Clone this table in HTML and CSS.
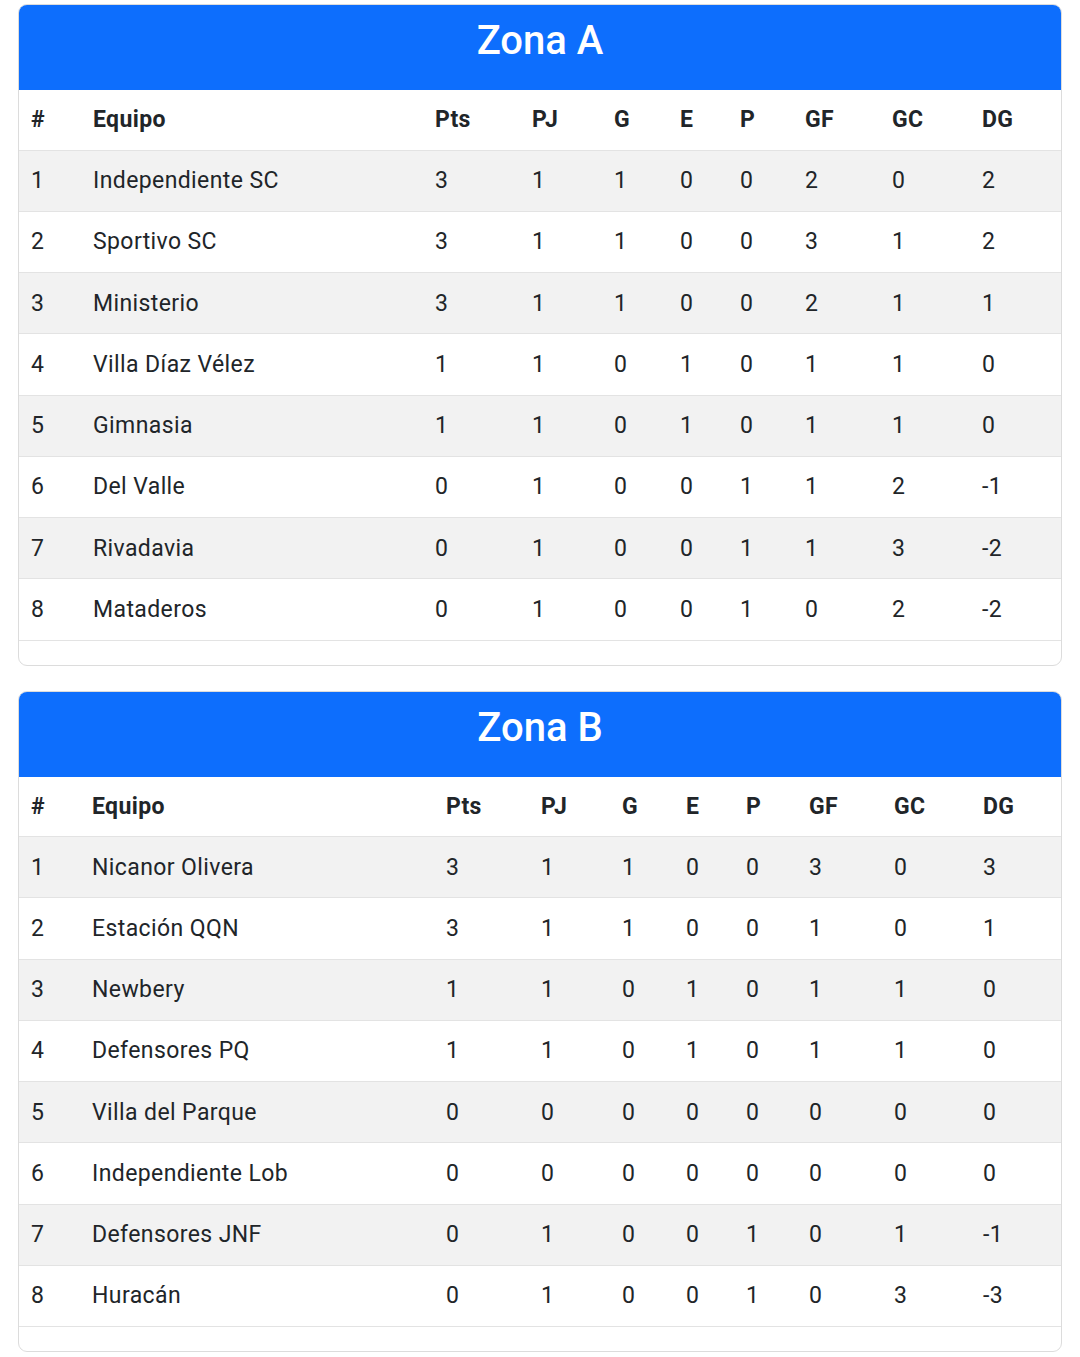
FILE: index.html
```html
<!DOCTYPE html>
<html lang="es">
<head>
<meta charset="utf-8">
<title>Zonas</title>
<link rel="stylesheet" href="styles.css">
</head>
<body>
<div class="page">
  <section class="card">
    <h2 class="card-header">Zona A</h2>
    <div class="card-body">
      <table class="standings zone-a">
        <colgroup>
          <col class="c1"><col class="c2"><col class="c3"><col class="c4"><col class="c5"><col class="c6"><col class="c7"><col class="c8"><col class="c9"><col class="c10">
        </colgroup>
        <thead>
          <tr><th>#</th><th>Equipo</th><th>Pts</th><th>PJ</th><th>G</th><th>E</th><th>P</th><th>GF</th><th>GC</th><th>DG</th></tr>
        </thead>
        <tbody>
          <tr><td>1</td><td>Independiente SC</td><td>3</td><td>1</td><td>1</td><td>0</td><td>0</td><td>2</td><td>0</td><td>2</td></tr>
          <tr><td>2</td><td>Sportivo SC</td><td>3</td><td>1</td><td>1</td><td>0</td><td>0</td><td>3</td><td>1</td><td>2</td></tr>
          <tr><td>3</td><td>Ministerio</td><td>3</td><td>1</td><td>1</td><td>0</td><td>0</td><td>2</td><td>1</td><td>1</td></tr>
          <tr><td>4</td><td>Villa Díaz Vélez</td><td>1</td><td>1</td><td>0</td><td>1</td><td>0</td><td>1</td><td>1</td><td>0</td></tr>
          <tr><td>5</td><td>Gimnasia</td><td>1</td><td>1</td><td>0</td><td>1</td><td>0</td><td>1</td><td>1</td><td>0</td></tr>
          <tr><td>6</td><td>Del Valle</td><td>0</td><td>1</td><td>0</td><td>0</td><td>1</td><td>1</td><td>2</td><td>-1</td></tr>
          <tr><td>7</td><td>Rivadavia</td><td>0</td><td>1</td><td>0</td><td>0</td><td>1</td><td>1</td><td>3</td><td>-2</td></tr>
          <tr><td>8</td><td>Mataderos</td><td>0</td><td>1</td><td>0</td><td>0</td><td>1</td><td>0</td><td>2</td><td>-2</td></tr>
        </tbody>
      </table>
    </div>
  </section>

  <section class="card">
    <h2 class="card-header">Zona B</h2>
    <div class="card-body">
      <table class="standings zone-b">
        <colgroup>
          <col class="c1"><col class="c2"><col class="c3"><col class="c4"><col class="c5"><col class="c6"><col class="c7"><col class="c8"><col class="c9"><col class="c10">
        </colgroup>
        <thead>
          <tr><th>#</th><th>Equipo</th><th>Pts</th><th>PJ</th><th>G</th><th>E</th><th>P</th><th>GF</th><th>GC</th><th>DG</th></tr>
        </thead>
        <tbody>
          <tr><td>1</td><td>Nicanor Olivera</td><td>3</td><td>1</td><td>1</td><td>0</td><td>0</td><td>3</td><td>0</td><td>3</td></tr>
          <tr><td>2</td><td>Estación QQN</td><td>3</td><td>1</td><td>1</td><td>0</td><td>0</td><td>1</td><td>0</td><td>1</td></tr>
          <tr><td>3</td><td>Newbery</td><td>1</td><td>1</td><td>0</td><td>1</td><td>0</td><td>1</td><td>1</td><td>0</td></tr>
          <tr><td>4</td><td>Defensores PQ</td><td>1</td><td>1</td><td>0</td><td>1</td><td>0</td><td>1</td><td>1</td><td>0</td></tr>
          <tr><td>5</td><td>Villa del Parque</td><td>0</td><td>0</td><td>0</td><td>0</td><td>0</td><td>0</td><td>0</td><td>0</td></tr>
          <tr><td>6</td><td>Independiente Lob</td><td>0</td><td>0</td><td>0</td><td>0</td><td>0</td><td>0</td><td>0</td><td>0</td></tr>
          <tr><td>7</td><td>Defensores JNF</td><td>0</td><td>1</td><td>0</td><td>0</td><td>1</td><td>0</td><td>1</td><td>-1</td></tr>
          <tr><td>8</td><td>Huracán</td><td>0</td><td>1</td><td>0</td><td>0</td><td>1</td><td>0</td><td>3</td><td>-3</td></tr>
        </tbody>
      </table>
    </div>
  </section>
</div>
</body>
</html>
```

FILE: styles.css
```css
* { box-sizing: border-box; }

html, body {
  margin: 0;
  padding: 0;
  background: #ffffff;
}

body {
  font-family: Roboto, "Noto Sans", "Liberation Sans", sans-serif;
  color: #212529;
}

.page {
  display: flex;
  flex-direction: column;
  gap: 25px;
  padding: 4px 18px 0 18px;
}

.card {
  border: 1px solid #dcdcdc;
  border-radius: 9px;
  overflow: hidden;
  background: #fff;
}

.card-header {
  margin: 0;
  height: 85px;
  background: #0d6efd;
  color: #ffffff;
  font-size: 40px;
  font-weight: 500;
  line-height: 72px;
  text-align: center;
}

.card-body {
  padding-bottom: 24px;
}

.standings {
  width: 100%;
  border-collapse: collapse;
  table-layout: fixed;
  font-size: 23px;
  letter-spacing: 0.4px;
}

.standings th,
.standings td {
  padding: 0 12px;
  text-align: left;
  vertical-align: middle;
  white-space: nowrap;
  border-bottom: 1px solid #e3e3e3;
}

.standings th {
  height: 60px;
  font-weight: 700;
  color: #212529;
}

.standings td {
  height: 61.25px;
  font-weight: 400;
  color: #212529;
}

.standings tbody tr:nth-child(odd) td {
  background: #f2f2f2;
}

.zone-a .c1 { width: 62px; }
.zone-a .c2 { width: 342px; }
.zone-a .c3 { width: 97px; }
.zone-a .c4 { width: 82px; }
.zone-a .c5 { width: 66px; }
.zone-a .c6 { width: 60px; }
.zone-a .c7 { width: 65px; }
.zone-a .c8 { width: 87px; }
.zone-a .c9 { width: 90px; }
.zone-a .c10 { width: 91px; }

.zone-b .c1 { width: 61px; }
.zone-b .c2 { width: 354px; }
.zone-b .c3 { width: 95px; }
.zone-b .c4 { width: 81px; }
.zone-b .c5 { width: 64px; }
.zone-b .c6 { width: 60px; }
.zone-b .c7 { width: 63px; }
.zone-b .c8 { width: 85px; }
.zone-b .c9 { width: 89px; }
.zone-b .c10 { width: 90px; }
```
